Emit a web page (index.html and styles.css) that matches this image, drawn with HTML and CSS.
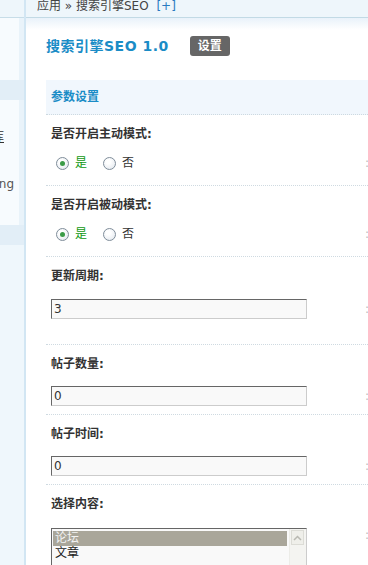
FILE: index.html
```html
<!DOCTYPE html>
<html lang="zh-CN">
<head>
    <meta charset="UTF-8">
    <title>搜索引擎SEO</title>
    <link rel="stylesheet" href="styles.css">
</head>
<body>
<div class="frame">
    <aside class="side">
        <div class="side-top"></div>
        <div class="side-block b1"></div>
        <div class="side-band"></div>
        <div class="side-block b2">
            <div class="side-item link"><a>数据库</a></div>
            <div class="side-item ping">Ping</div>
        </div>
        <div class="side-band"></div>
        <div class="side-rest"></div>
    </aside>

    <div class="main">
        <div class="crumb">应用 &raquo; 搜索引擎SEO <a class="add">[+]</a></div>
        <div class="content">
            <div class="itemtitle">
                <h3>搜索引擎SEO 1.0</h3>
                <span class="btn">设置</span>
            </div>

            <div class="panel">
                <div class="panel-head">参数设置</div>

                <div class="row radio-row">
                    <div class="label">是否开启主动模式:</div>
                    <div class="ctrl">
                        <div class="radios">
                            <label class="radio checked"><span class="dot"></span>是</label>
                            <label class="radio"><span class="dot"></span>否</label>
                        </div>
                        <span class="tip">:</span>
                    </div>
                </div>

                <div class="row radio-row">
                    <div class="label">是否开启被动模式:</div>
                    <div class="ctrl">
                        <div class="radios">
                            <label class="radio checked"><span class="dot"></span>是</label>
                            <label class="radio"><span class="dot"></span>否</label>
                        </div>
                        <span class="tip">:</span>
                    </div>
                </div>

                <div class="row input-row first">
                    <div class="label">更新周期:</div>
                    <div class="ctrl">
                        <input class="txt" type="text" value="3">
                        <span class="tip">:</span>
                    </div>
                </div>

                <div class="row input-row">
                    <div class="label">帖子数量:</div>
                    <div class="ctrl">
                        <input class="txt" type="text" value="0">
                        <span class="tip">:</span>
                    </div>
                </div>

                <div class="row input-row">
                    <div class="label">帖子时间:</div>
                    <div class="ctrl">
                        <input class="txt" type="text" value="0">
                        <span class="tip">:</span>
                    </div>
                </div>

                <div class="row select-row">
                    <div class="label">选择内容:</div>
                    <div class="ctrl">
                        <div class="select">
                            <div class="options">
                                <div class="opt selected">论坛</div>
                                <div class="opt">文章</div>
                            </div>
                            <div class="scroll">
                                <span class="arrow">
                                    <svg width="9" height="6" viewBox="0 0 9 6"><path d="M1 5 L4.5 1.5 L8 5" fill="none" stroke="#b9b9b2" stroke-width="1.5"/></svg>
                                </span>
                            </div>
                        </div>
                        <span class="tip">:</span>
                    </div>
                </div>
            </div>
        </div>
    </div>
</div>
</body>
</html>
```

FILE: styles.css
```css
html, body { margin: 0; padding: 0; background: #fff; overflow: hidden; }
body { font: 12px "DejaVu Sans", "Noto Sans CJK SC", sans-serif; color: #333; }

.frame { display: grid; grid-template-columns: 26px 1fr; min-height: 565px; }

/* left menu, mostly cut off */
.side { background: #e9f3fa; border-right: 2px solid #d2e6f3; display: flex; flex-direction: column; }
.side-top { height: 17px; background: #eef6fb; border-bottom: 1px solid #c7dde8; }
.side-block { width: 19px; background: #f7fbfe; }
.b1 { height: 62px; }
.b2 { height: 125px; display: flex; flex-direction: column; }
.side-band { height: 20px; background: #e2eef7; }
.side-rest { flex: 1; background: #eff7fc; }
.side-item { display: flex; justify-content: flex-end; overflow: hidden; white-space: nowrap; color: #555; line-height: 16px; }
.side-item.link { margin-top: 29px; padding-right: 15px; }
.side-item.link a { text-decoration: underline; color: #333; }
.side-item.ping { margin-top: 31px; padding-right: 5px; font-family: "DejaVu Sans", sans-serif; }

/* main area */
.main { overflow: hidden; background: linear-gradient(#e9f2fa, #fff 12px) no-repeat 0 18px; }
.crumb { height: 17px; line-height: 12px; padding-left: 11px; background: #eef6fb; border-bottom: 1px solid #c2dae5; color: #444; white-space: nowrap; }
.crumb .add { color: #2a7bc0; margin-left: 4px; }

.content { padding-left: 20px; }

.itemtitle { display: flex; align-items: center; margin: 18px 0 24px; height: 20px; }
.itemtitle h3 { margin: 0; font-size: 14px; line-height: 20px; color: #1a8cc6; font-weight: bold; letter-spacing: 0.5px; }
.btn { margin-left: 21px; width: 40px; height: 20px; line-height: 20px; text-align: center; background: #666; color: #fff; font-weight: bold; border-radius: 3px; }

.panel-head { height: 34px; line-height: 35px; padding-left: 5px; background: #f1f7fd; color: #1a8cc6; font-weight: bold; border-bottom: 1px dotted #cdd9e0; }

.row { padding: 9px 0 0 5px; border-bottom: 1px dotted #cfdae1; }
.label { line-height: 20px; font-weight: bold; color: #333; }
.ctrl { display: grid; grid-template-columns: 314px auto; align-items: center; }
.tip { color: #bbb; white-space: nowrap; }

.radio-row { padding-bottom: 12px; }
.radio-row .ctrl { margin-top: 9px; height: 20px; }
.radios { display: flex; align-items: center; padding-left: 5px; }
.radio { display: inline-flex; align-items: center; gap: 6px; margin-right: 16px; color: #333; line-height: 20px; }
.radio.checked { color: #119911; }
.dot { width: 11px; height: 11px; border: 1px solid #7f8d9a; border-radius: 50%; background: radial-gradient(circle at 40% 35%, #fff 20%, #dfe5ec 100%); display: flex; align-items: center; justify-content: center; }
.radio.checked .dot::after { content: ""; width: 5px; height: 5px; border-radius: 50%; background: #3b9b47; }

.input-row .ctrl { margin-top: 12px; }
.input-row { padding-bottom: 8px; }
.input-row.first { padding-bottom: 25px; }
.input-row.first .ctrl { margin-top: 13px; }
.txt { box-sizing: border-box; width: 256px; height: 20px; margin: 0; padding: 0 2px; border: 1px solid; border-color: #666 #ccc #ccc #666; background: #f9f9f9; font: 12px "DejaVu Sans", sans-serif; color: #333; outline: none; }

.select-row .ctrl { margin-top: 14px; align-items: start; }
.select { box-sizing: border-box; width: 256px; height: 70px; border: 1px solid; border-color: #666 #ccc #ccc #666; background: #f9f9f9; display: flex; }
.options { flex: 1; padding: 2px 2px 0 1px; }
.opt { line-height: 15px; padding-left: 2px; color: #222; }
.opt.selected { background: #a9a69a; color: #f2f2f2; }
.scroll { width: 16px; background: #f4f4f1; border-left: 1px solid #ecece8; padding-top: 1px; }
.arrow { display: flex; align-items: center; justify-content: center; width: 13px; height: 15px; margin-left: 1px; border: 1px solid #dcdcd6; background: #efefea; box-sizing: border-box; }
```
